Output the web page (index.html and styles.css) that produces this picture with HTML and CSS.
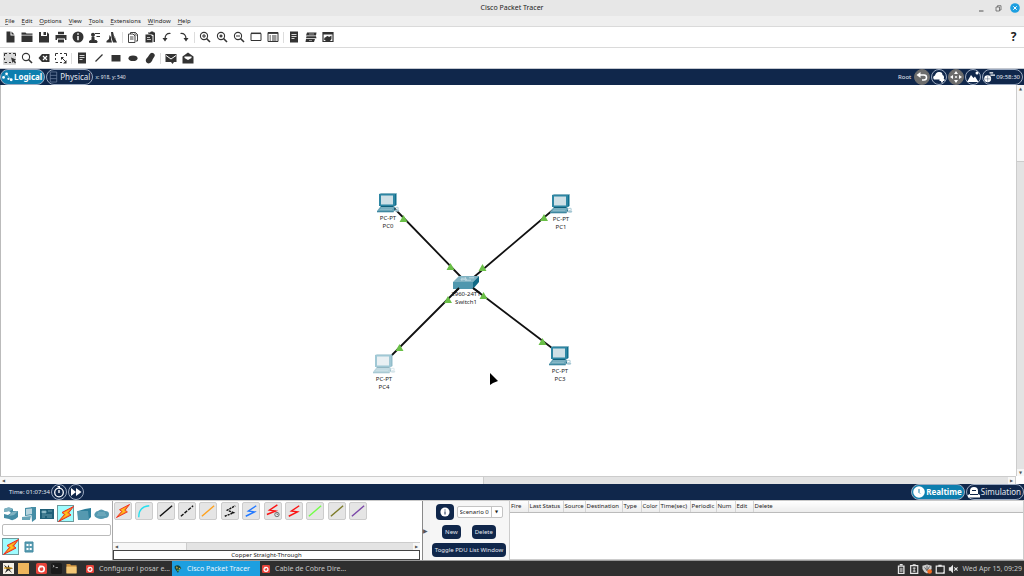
FILE: index.html
```html
<!DOCTYPE html>
<html lang="en">
<head>
<meta charset="utf-8">
<title>Cisco Packet Tracer</title>
<link rel="stylesheet" href="styles.css">
</head>
<body>
<svg class="sprite" aria-hidden="true">
  <symbol id="pc" viewBox="0 0 23 20">
    <path d="M2 1 4 0h15l-1 1z" fill="#7fb0c0"/><path d="M18 1l1.500-1v12L18 13z" fill="#0f6e8c"/>
    <path d="M2 1h16v12H2z" fill="#2e86a3"/><path d="M4 2.500h12v9H4z" fill="#cfe0e6"/>
    <path d="M4 13h12l2 1H3z" fill="#0f5f7a"/>
    <path d="M3 14h15l-1.500 4H0z" fill="#69a5b8"/><path d="M0 18h16.500v1.300H0z" fill="#3f88a0"/><path d="M18 14v3l-1.500 2.300V18z" fill="#1b6b86"/>
    <path d="M4 15h12M3 16.500h12" stroke="#a9cbd6" stroke-width=".5"/>
    <path d="M18 15q4-2 3 1" fill="none" stroke="#8fb9c8" stroke-width=".8"/><ellipse cx="20" cy="17.500" rx="2.300" ry="1.300" fill="#a4c6d2"/>
  </symbol>
  <symbol id="switch" viewBox="0 0 26 13">
    <path d="M6 0h20l-6 6H0z" fill="#7fb2c2"/><path d="M0 6h20v7H0z" fill="#4f97ae"/><path d="M20 6l6-6v6l-6 7z" fill="#0f6a86"/>
    <path d="M8 2.200h5l-1-1m1 1-1 1M14 3.700H8l1-1m-1 1 1 1M21 1.800h-5M18 4.200h-6" fill="none" stroke="#d6e7ed" stroke-width=".7"/>
  </symbol>
  <symbol id="bolt" viewBox="0 0 16 16">
    <path d="M15.500.500 4 6.500 6.500 8.500.500 15.500 13 9 10.500 7z" fill="#f6901a" stroke="#f2281e" stroke-width="1"/><path d="M12 3.500 5.500 6.700 8 8.500 4 12.500 11 8.700 8.500 6.800z" fill="#ffc21e"/>
  </symbol>
  <symbol id="swirl" viewBox="0 0 12 12"><rect width="12" height="12" rx="2" fill="#e8443a"/><circle cx="6" cy="6.500" r="3" fill="none" stroke="#fff" stroke-width="1.800"/><path d="M3.500 2.500 6.500 3.500 5.500 6z" fill="#fff"/></symbol>
  <symbol id="glass" viewBox="0 0 12 12"><circle cx="5" cy="5" r="3.600" fill="none" stroke="#333" stroke-width="1.100"/><path d="M7.500 7.500 11 11" stroke="#333" stroke-width="1.600"/></symbol>
</svg>

<header class="titlebar">
  <h1>Cisco Packet Tracer</h1>
  <div class="window-controls">
    <button aria-label="Minimize"><svg viewBox="0 0 10 10"><path d="M3 8h4.500" stroke="#555"/></svg></button>
    <button aria-label="Restore"><svg viewBox="0 0 10 10"><path d="M3 4h3.500v4H3zM4.500 4V2.700H8V7H6.500" fill="none" stroke="#666" stroke-width=".8"/></svg></button>
    <button class="close" aria-label="Close"><svg viewBox="0 0 10 10"><circle cx="5" cy="5" r="4.800" fill="#1d9fe0"/><path d="M3.300 3.300 6.700 6.700M6.700 3.300 3.300 6.700" stroke="#fff"/></svg></button>
  </div>
</header>

<nav class="menubar">
  <button><u>F</u>ile</button><button><u>E</u>dit</button><button><u>O</u>ptions</button><button><u>V</u>iew</button><button><u>T</u>ools</button><button><u>E</u>xtensions</button><button><u>W</u>indow</button><button><u>H</u>elp</button>
</nav>

<div class="toolbar">
  <button aria-label="New"><svg viewBox="0 0 12 12"><path d="M2.500.500h4v4h4v7h-8zM7.500.500l3 3h-3z" fill="#333"/></svg></button>
  <button aria-label="Open"><svg viewBox="0 0 12 12"><path d="M.500 1.500h4l1 1h6v1.300H.500zM.500 4.500h11V11H.500z" fill="#333"/></svg></button>
  <button aria-label="Save"><svg viewBox="0 0 12 12"><path d="M1 1h2v4h6V1l2 2v8.500H1zM5.500 1H8v3H5.500z" fill="#333"/></svg></button>
  <button aria-label="Print"><svg viewBox="0 0 12 12"><path d="M3 .800h6v2.400H3zM.500 4h11v5H10V7.500H2V9H.500zM3 8.500h6v3H3z" fill="#333"/></svg></button>
  <button aria-label="Activity wizard"><svg viewBox="0 0 12 12"><circle cx="6" cy="6" r="5.500" fill="#333"/><path d="M6 2.300v1.500M6 5v4.200" stroke="#fff" stroke-width="1.500"/></svg></button>
  <button aria-label="User"><svg viewBox="0 0 12 12"><circle cx="4" cy="3.800" r="2" fill="#333"/><path d="M.500 11.500V10L3 9V6h2v3l3 1v1.500zM6 2.500h5M7.500 5.500H11" fill="#333" stroke="#333"/></svg></button>
  <button aria-label="Users"><svg viewBox="0 0 12 12"><path d="M5 1h2l1 4 3 6.500H7L5.500 7zM3.500 4 5 6v2l1 3.500H.500V10L3 8z" fill="#333"/><path d="M8 5l1.500 3" stroke="#999"/></svg></button>
  <span class="separator"></span>
  <button aria-label="Copy"><svg viewBox="0 0 12 12"><path d="M3.500 3V1.500h5l2 2V10H9M1.500 3H6l2 2v6.500H1.500zM3 6h3.500M3 8h3.500" fill="none" stroke="#444"/><path d="M8 1v3h3" fill="none" stroke="#444" stroke-width=".8"/></svg></button>
  <button aria-label="Paste"><svg viewBox="0 0 12 12"><path d="M4 2.500v-1h2l1-1h2l1 1h1V11H9.500V4z" fill="#333"/><path d="M1.500 3.500h5l2 2v6h-7z" fill="#333"/><path d="M3 6.500h3M3 8.500h4" stroke="#fff" stroke-width=".7"/></svg></button>
  <button aria-label="Undo"><svg viewBox="0 0 12 12"><path d="M9.500 2.500Q4 2 4 8" fill="none" stroke="#333" stroke-width="1.200"/><path d="M1.500 7h5L4 10.500z" fill="#333"/></svg></button>
  <button aria-label="Redo"><svg viewBox="0 0 12 12"><path d="M2.500 2.500Q8 2 8 8" fill="none" stroke="#333" stroke-width="1.200"/><path d="M5.500 7h5L8 10.500z" fill="#333"/></svg></button>
  <span class="separator"></span>
  <button aria-label="Zoom in"><svg viewBox="0 0 12 12"><use href="#glass"/><path d="M5 3v4M3 5h4" stroke="#333"/></svg></button>
  <button aria-label="Zoom reset"><svg viewBox="0 0 12 12"><use href="#glass"/><path d="M5 3.500v3M3.500 5h3" stroke="#333" stroke-width="1.400"/></svg></button>
  <button aria-label="Zoom out"><svg viewBox="0 0 12 12"><use href="#glass"/><path d="M3 5h4" stroke="#333"/></svg></button>
  <button aria-label="Drawing palette"><svg viewBox="0 0 12 12"><path d="M1 2.500h10v7H1z" fill="none" stroke="#333"/><path d="M1 2.300h10" stroke="#333" stroke-width="1.500"/></svg></button>
  <button aria-label="Custom devices"><svg viewBox="0 0 12 12"><path d="M1 1.500h10v9H1z" fill="none" stroke="#333"/><path d="M1 2h10" stroke="#333" stroke-width="1.800"/><path d="M2.500 5h1.500M2.500 7h1.500M2.500 9h1.500M5 5h4.500M5 7h4.500M5 9h4.500" stroke="#333"/></svg></button>
  <span class="separator"></span>
  <button aria-label="Notes"><svg viewBox="0 0 12 12"><path d="M2 .500h8v11H2z" fill="#333"/><path d="M3.500 3.500h5M3.500 5.500h5M3.500 7.500h3" stroke="#fff" stroke-width=".8"/></svg></button>
  <button aria-label="Cluster"><svg viewBox="0 0 12 12"><path d="M2 1.500h9.500l-.500 3H1zM1.500 5.200h9.500l.500 2H1zM1 8h9l-1 3H.500z" fill="#333"/><path d="M4 3h5M4 9.500h3" stroke="#ddd" stroke-width=".6"/></svg></button>
  <button aria-label="Monitor"><svg viewBox="0 0 12 12"><path d="M1 1.500h10v9H1z" fill="none" stroke="#333" stroke-width="1.200"/><path d="M1 2.500h10" stroke="#333" stroke-width="2"/><path d="M2 8.500Q2 6 4 6q1.500-2 3 0l2.500-1.500V8L8 10H4z" fill="#333"/></svg></button>
  <button class="help" aria-label="Help">?</button>
</div>

<div class="toolbar">
  <button class="selected" aria-label="Select"><svg viewBox="0 0 12 12"><path d="M.500 4V1.500H3M5 1.500h2M9 1.500h2.500V4M.500 6v2M.500 10.500H3M5 10.500h2" fill="none" stroke="#333"/><path d="M7 5.500 12 7.500 10.500 8.500 12 10.500 11 11.500 9.500 9.500 8.500 11z" fill="#333"/></svg></button>
  <button aria-label="Inspect"><svg viewBox="0 0 12 12"><use href="#glass"/></svg></button>
  <button aria-label="Delete"><svg viewBox="0 0 12 12"><path d="M.500 6 4 2h7.500v8H4z" fill="#333"/><path d="M5 4l4 4M9 4 5 8" stroke="#fff" stroke-width="1.200"/></svg></button>
  <button aria-label="Resize"><svg viewBox="0 0 12 12"><path d="M.500 4V1.500H3M5 1.500h2M9 1.500h2.500V4M.500 6v2M.500 10.500H3M5 10.500h2M7 6l4 4" fill="none" stroke="#333"/><path d="M11.500 8v3.500H8zM6 5h3L6 8z" fill="#333"/></svg></button>
  <span class="separator"></span>
  <button aria-label="Place note"><svg viewBox="0 0 12 12"><path d="M2 .500h8v11H2z" fill="#333"/><path d="M3.500 3.500h5M3.500 5.500h5M3.500 7.500h3" stroke="#fff" stroke-width=".8"/></svg></button>
  <button aria-label="Line"><svg viewBox="0 0 12 12"><path d="M2.500 9.500l7-7" stroke="#333" stroke-width="1.300"/></svg></button>
  <button aria-label="Rectangle"><svg viewBox="0 0 12 12"><path d="M1.500 3h9v6.500h-9z" fill="#333"/></svg></button>
  <button aria-label="Ellipse"><svg viewBox="0 0 12 12"><ellipse cx="6" cy="6.200" rx="4.500" ry="2.800" fill="#333"/></svg></button>
  <button aria-label="Freeform"><svg viewBox="0 0 12 12"><path d="M5.500 2.500Q7 0 9.500 1.200 12 3 9.800 5.500 8.500 7 8 9 6 12.500 3 11 .800 9 2.500 6.500 4 5 5.500 2.500z" fill="#333"/></svg></button>
  <span class="separator"></span>
  <button aria-label="Add simple PDU"><svg viewBox="0 0 12 12"><path d="M.500 2h11v8H9L7.500 12 6 10H.500z" fill="#333"/><path d="M1 3.500l5 3.500 5-3.500" fill="none" stroke="#fff"/></svg></button>
  <button aria-label="Add complex PDU"><svg viewBox="0 0 12 12"><path d="M.500 4.500 6 .500l5.500 4v7H.500z" fill="#333"/><path d="M2.500 4.500h7V6L6 8 2.500 6z" fill="#fff"/></svg></button>
</div>

<div class="navbar">
  <button class="pill active"><svg viewBox="0 0 12 12"><path d="M1.500 6 5 3l4 5" fill="none" stroke="#9cd4e8" stroke-width=".6"/><circle cx="1.700" cy="6.500" r="1.500"/><circle cx="5" cy="2.500" r="1.500"/><circle cx="7" cy="8" r="1.200"/><circle cx="10" cy="9" r="1.600"/></svg>Logical</button>
  <button class="pill"><svg viewBox="0 0 12 12"><path d="M2.500.500h7v11h-7zM2.500 4.200h7M2.500 7.800h7" fill="none" stroke="#7183a2" stroke-width=".8"/></svg>Physical</button>
  <span class="coords">x: 918, y: 540</span>
  <span class="root">Root</span>
  <button class="round gray" aria-label="Back"><svg viewBox="0 0 12 12"><path d="M3 4h5q2.500 0 2.500 2.500T8 9H6" fill="none" stroke="#fff" stroke-width="1.500"/><path d="M.500 4 4.500 1v6z"/></svg></button>
  <button class="round" aria-label="New cluster"><svg viewBox="0 0 12 12"><path d="M1 8.500q-2-3 1-4 1-4 4.500-3.500 3 0 3 3 2.500 1 1 4.500z"/><path d="M9 6.500v5M6.500 9h5" stroke="#fff" stroke-width="1.800"/></svg></button>
  <button class="round gray" aria-label="Move object"><svg viewBox="0 0 12 12"><path d="M6 0l2 3H4zM6 12l2-3H4zM0 6l3-2v4zM12 6 9 4v4z"/><circle cx="6" cy="6" r="1"/></svg></button>
  <button class="round" aria-label="Set background"><svg viewBox="0 0 12 12"><path d="M0 11l4-7 2.500 3L8 5.500 11.500 11z"/><circle cx="10" cy="2" r="1.500"/></svg></button>
  <button class="pill clock"><svg viewBox="0 0 12 12"><circle cx="4" cy="8" r="3.800"/><path d="M6 1.500h4M7 4h5" stroke="#fff" stroke-width="1.300"/><path d="M1 8h6M4 5v6" stroke="#10274b" stroke-width=".4"/></svg>09:58:30</button>
</div>

<main class="workspace">
  <section class="canvas" aria-label="Logical topology">
    <svg class="links" aria-hidden="true">
      <path d="M394 123 461 192M554 124 474 192M392 270 459 203M552 263 473 203" stroke="#111" stroke-width="1.800"/>
      <path d="M403.500 130l4 7h-8zM450.500 178l4 7h-8zM544 129l4 7h-8zM482.500 179l4 7h-8zM399.500 259l4 7h-8zM542.500 253l4 7h-8z" fill="#6abf47"/>
    </svg>
    <figure class="node pc0"><svg class="pc-icon"><use href="#pc"/></svg><figcaption>PC-PT<br>PC0</figcaption></figure>
    <figure class="node pc1"><svg class="pc-icon"><use href="#pc"/></svg><figcaption>PC-PT<br>PC1</figcaption></figure>
    <figure class="node pc3"><svg class="pc-icon"><use href="#pc"/></svg><figcaption>PC-PT<br>PC3</figcaption></figure>
    <figure class="node pc4"><svg class="pc-icon"><use href="#pc"/></svg><figcaption>PC-PT<br>PC4</figcaption></figure>
    <figure class="node switch1"><svg class="switch-icon"><use href="#switch"/></svg><figcaption>2960-24TT<br>Switch1</figcaption></figure>
    <svg class="links" aria-hidden="true"><path d="M448 211l4 7h-8zM483.500 207l4 7h-8z" fill="#6abf47"/><path d="M459 203l-6 6M473 203l7 5" stroke="#111" stroke-width="1.800"/><path d="M490 288v12l3-2 5-2z" fill="#000"/></svg>
  </section>
  <div class="vscroll"><button aria-label="Scroll up">▲</button><i></i><span></span><button aria-label="Scroll down">▼</button></div>
  <div class="hscroll"><button aria-label="Scroll left">◀</button><i></i><span></span><button aria-label="Scroll right">▶</button></div>
</main>

<div class="timebar">
  <span>Time: 01:07:34</span>
  <button class="round" aria-label="Power cycle devices"><svg viewBox="0 0 12 12"><circle cx="6" cy="6.500" r="4.300" fill="none" stroke="#fff" stroke-width="1.300"/><path d="M4 0h3v3zM5.300 4h1.400v3H5.300z"/></svg></button>
  <button class="round" aria-label="Fast forward"><svg viewBox="0 0 12 12"><path d="M1 2l5 4-5 4zM6 2l5.500 4L6 10z"/></svg></button>
  <button class="pill active mode"><svg viewBox="0 0 12 12"><circle cx="6" cy="6" r="5.800"/><path d="M6 3v3.500l1 1" fill="none" stroke="#0d7eae"/></svg>Realtime</button>
  <button class="pill"><svg viewBox="0 0 12 12"><path d="M2 8V5q0-4 4-4t4 4v3l2 1v2.500H0V9z"/><path d="M4 4.500h4M2 8.500h8" stroke="#10274b"/></svg>Simulation</button>
</div>

<section class="bottom">
  <div class="devices">
    <div class="device-row full">
      <button aria-label="Network devices"><svg viewBox="0 0 16 16"><path d="M1 3q5-3 9 0v2h5v6q-5 5-9 2l-5-1V8l4 1 3-2-2-2-5 1z" fill="#448ca5"/><path d="M1 3q5-3 9 0L7 5 1 6zM9 6l6-1-4 4-5 1z" fill="#7fb2c2"/></svg></button>
      <button aria-label="End devices"><svg viewBox="0 0 16 16"><path d="M10 1h5v12l-4 3z" fill="#448ca5"/><path d="M4 2l8-1v8l-8 1z" fill="#448ca5"/><path d="M5 3l6-.600v5.600L5 9z" fill="#b8d4de"/><path d="M1 11l9-1-1 4H1z" fill="#69a5b8"/></svg></button>
      <button aria-label="Components"><svg viewBox="0 0 16 16"><path d="M1 3h14v10H1z" fill="#1f5f78"/><path d="M3 5h4v2H3zM9 5h4M3 9h10M3 11h3M8 11h5" fill="#9bc3d1" stroke="#7aa9b9" stroke-width=".8"/></svg></button>
      <button class="picked" aria-label="Connections"><svg viewBox="0 0 16 16"><use href="#bolt"/></svg></button>
      <button aria-label="Miscellaneous"><svg viewBox="0 0 16 16"><path d="M2 5l7-2 6-1v9l-2 2H2z" fill="#2e7f9b"/><path d="M1 5h11l1 9H2z" fill="#5599b0"/></svg></button>
      <button aria-label="Multiuser connection"><svg viewBox="0 0 16 16"><path d="M3 12q-4-2-2-5 1-2 3-2 3-3 7 0 4 0 4 3 0 4-4 4-4 2-8 0z" fill="#5599b0"/><path d="M4 7h7M3 9h9" stroke="#82b5c5"/></svg></button>
    </div>
    <input type="text" aria-label="Search devices">
    <div class="device-row">
      <button class="picked" aria-label="Connections"><svg viewBox="0 0 16 16"><use href="#bolt"/></svg></button>
      <button aria-label="Structured cabling"><svg viewBox="0 0 16 16"><path d="M4 3h8v10H4z" fill="#5c9eb3" stroke="#3f88a0"/><path d="M5.500 5h2v2h-2zM8.700 5h2v2h-2zM5.500 9h2v2h-2zM8.700 9h2v2h-2z" fill="#fff"/></svg></button>
    </div>
  </div>
  <div class="cables">
    <div class="cable-row">
      <button aria-label="Automatic"><svg viewBox="0 0 16 16"><use href="#bolt"/></svg></button>
      <button aria-label="Console"><svg viewBox="0 0 16 16"><path d="M2 15Q2 3 14 2" stroke="#25dfee"/></svg></button>
      <button aria-label="Copper Straight-Through"><svg viewBox="0 0 16 16"><path d="M1 14 15 2" stroke="#111"/></svg></button>
      <button aria-label="Copper Cross-Over"><svg viewBox="0 0 16 16"><path d="M1 14 15 2" stroke="#111" stroke-dasharray="4 1.500"/></svg></button>
      <button aria-label="Fiber"><svg viewBox="0 0 16 16"><path d="M1 14 15 2" stroke="#ffa11c"/></svg></button>
      <button aria-label="Phone"><svg viewBox="0 0 16 16"><path d="M2 14 12 10 5 7 14 2" stroke="#111" stroke-dasharray="2.500 1"/></svg></button>
      <button aria-label="Coaxial"><svg viewBox="0 0 16 16"><path d="M2 14 12 9 5 8 14 2" stroke="#2379ff"/></svg></button>
      <button aria-label="Serial DCE"><svg viewBox="0 0 16 16"><path d="M1 12 11 8 4 7 13 1" stroke="#fb1414"/><circle cx="12.500" cy="12" r="2.500" stroke="#444" stroke-width=".8"/><path d="M12.500 10.500v1.500h1.500" stroke="#444" stroke-width=".7"/></svg></button>
      <button aria-label="Serial DTE"><svg viewBox="0 0 16 16"><path d="M2 14 12 9 5 8 14 2" stroke="#fb1414"/></svg></button>
      <button aria-label="Octal"><svg viewBox="0 0 16 16"><path d="M1 14 15 2" stroke="#72ff48"/></svg></button>
      <button aria-label="IoT Custom Cable"><svg viewBox="0 0 16 16"><path d="M1 14 15 2" stroke="#7c7a27"/></svg></button>
      <button aria-label="USB"><svg viewBox="0 0 16 16"><path d="M1 14 15 2" stroke="#7a46a8"/></svg></button>
    </div>
    <div class="cable-scroll"><button aria-label="Scroll left">◀</button><i></i><span></span><button aria-label="Scroll right">▶</button></div>
    <p class="cable-name">Copper Straight-Through</p>
  </div>
  <button class="splitter" aria-label="Collapse panel">▶</button>
  <div class="scenario">
    <div class="scenario-row">
      <button class="info" aria-label="Scenario information"><svg viewBox="0 0 12 12"><circle cx="6" cy="6" r="5.500" fill="#fff"/><path d="M6 3v1.200M6 5.300V9" stroke="#10274b" stroke-width="1.200"/></svg></button>
      <span class="select-box"><select aria-label="Scenario"><option>Scenario 0</option></select><b>▼</b></span>
    </div>
    <div class="scenario-row spaced"><button>New</button><button>Delete</button></div>
    <button>Toggle PDU List Window</button>
  </div>
  <div class="pdu">
    <table>
      <thead><tr><th class="c18">Fire</th><th class="c35">Last Status</th><th class="c22">Source</th><th class="c37">Destination</th><th class="c19">Type</th><th class="c18">Color</th><th class="c31">Time(sec)</th><th class="c26">Periodic</th><th class="c19">Num</th><th class="c18">Edit</th><th>Delete</th></tr></thead>
    </table>
  </div>
</section>

<footer class="taskbar">
  <div class="launchers">
    <button aria-label="Menu"><svg viewBox="0 0 12 12"><path d="M0 0h12v12H0z" fill="#f5f1e6"/><path d="M1 2l4 3 1-3 1 3 4 1-4 1 3 4-4-3-4 3 2-4z" fill="#222"/><path d="M1 5.500h9" stroke="#e6a417" stroke-width="1.300"/></svg></button>
    <button class="desktop" aria-label="Show desktop"><svg viewBox="0 0 12 12"><path d="M0 0h12v12H0z" fill="#eeb65d"/></svg></button>
    <button aria-label="Browser"><svg viewBox="0 0 12 12"><use href="#swirl"/></svg></button>
    <button aria-label="Terminal"><svg viewBox="0 0 12 12"><rect width="12" height="12" rx="2" fill="#1b1b1b"/><path d="M2 2.500l1.500 1L2 4.500M5 5h2.500" fill="none" stroke="#ddd" stroke-width=".8"/></svg></button>
    <button aria-label="Files"><svg viewBox="0 0 12 12"><path d="M.500 1h4l1 1.500h6V11H.500z" fill="#cf9440"/><path d="M.500 4h11v7.500H.500z" fill="#f4c877"/></svg></button>
  </div>
  <button class="task"><svg viewBox="0 0 12 12"><use href="#swirl"/></svg>Configurar i posar e...</button>
  <button class="task current"><svg viewBox="0 0 12 12"><path d="M1 2q4-3 8 0l2 3-3 2-2 5-3-4-2-3z" fill="#17463f"/><path d="M3 2l3 2-2 2zM7 5l3-1-2 3z" fill="#e7b93b"/><circle cx="6" cy="8" r="1.300" fill="#64b946"/></svg>Cisco Packet Tracer</button>
  <button class="task"><svg viewBox="0 0 12 12"><use href="#swirl"/></svg>Cable de Cobre Dire...</button>
  <div class="tray">
    <svg viewBox="0 0 12 12"><path d="M3 2.500h6.500v9H3zM4.500.800h3.500" fill="none" stroke="#e6e6e6" stroke-width="1.600"/><path d="M4.500 4.500h3.500V10H4.500z" fill="#999"/></svg>
    <svg viewBox="0 0 12 12"><path d="M2 2h8.500v9.300H2zM4.500 1h3.500" fill="none" stroke="#e6e6e6" stroke-width="1.400"/><path d="M6.200 4v5.500M4.500 5h3.500M4.500 8.500h3.500" stroke="#e6e6e6"/></svg>
    <svg viewBox="0 0 12 12"><path d="M.500 2 6 .500 11.500 2v4Q10 10 6 11.500 2 10 .500 6z" fill="#ccc"/><path d="M3 4l3 4 3-5M6 2v6" fill="none" stroke="#555"/><circle cx="9.200" cy="9" r="2.800" fill="#f26a21"/></svg>
    <svg viewBox="0 0 12 12"><path d="M1.500 2.500h9.500v8.500H1.500z" fill="none" stroke="#e6e6e6" stroke-width="1.500"/><path d="M1 9l2 2H1zM11 9l-2 2h2zM4 1h4v2H4z" fill="#e6e6e6"/></svg>
    <svg viewBox="0 0 12 12"><path d="M1 4h2l3-3v10L3 8H1z" fill="#e6e6e6"/><path d="M7.500 4l4 4M11.500 4l-4 4" stroke="#e6e6e6" stroke-width="1.300"/></svg>
    <time>Wed Apr 15, 09:29</time>
  </div>
</footer>
</body>
</html>
```
FILE: styles.css
```css
* { box-sizing: border-box; }

body {
  margin: 0;
  height: 100vh;
  display: flex;
  flex-direction: column;
  overflow: hidden;
  background: #fff;
  color: #222;
  font: 6px/8px "Noto Sans", sans-serif;
}

button, input, select {
  margin: 0;
  padding: 0;
  border: 0;
  background: none;
  color: inherit;
  font: inherit;
}

button svg, .tray svg { display: block; flex: none; }
.sprite { display: none; }

/* Window frame */
.titlebar {
  display: grid;
  grid-template-columns: 1fr auto 1fr;
  align-items: center;
  height: 16px;
  background: #e7e7e7;
}
.titlebar h1 { grid-column: 2; margin: 0; font: 7px/10px "Noto Sans", sans-serif; }
.window-controls { display: flex; justify-content: flex-end; gap: 7px; padding-right: 4px; }
.window-controls svg { width: 10px; height: 10px; }

.menubar {
  display: flex;
  align-items: center;
  gap: 7px;
  height: 10px;
  padding-left: 5px;
  background: #efefef;
}
.menubar u { text-underline-offset: 1px; text-decoration-thickness: 1px; text-decoration-color: #777; }

.toolbar {
  display: flex;
  align-items: center;
  height: 21px;
  padding: 0 2px 0 1px;
  border-top: 1px solid #dadada;
}
.toolbar button { display: flex; align-items: center; justify-content: center; width: 17px; height: 16px; }
.toolbar button svg { width: 12px; height: 12px; }
.toolbar .selected { width: 13px; height: 13px; margin: 0 2px; background: #d9d9d9; border-radius: 1px; }
.toolbar .help { margin-left: auto; font: bold 12px/14px "Noto Sans", sans-serif; }
.separator { width: 1px; height: 11px; margin: 0 1px 0 2px; background: #ddd; }

/* Navy bars */
.navbar, .timebar {
  display: flex;
  align-items: center;
  gap: 1px;
  background: #10274b;
  color: #e3e8f0;
}
.navbar { height: 17px; padding-right: 1px; border-top: 1px solid #c4c8d0; }
.pill {
  display: flex;
  align-items: center;
  gap: 1px;
  height: 16px;
  padding: 0 2px 0 1px;
  border: 1px solid #9caac0;
  border-radius: 8px;
  font-size: 8px;
}
.pill svg { width: 12px; height: 12px; fill: #fff; }
.pill.active { background: #0d7eae; color: #fff; font-weight: bold; }
.navbar .pill svg { width: 11px; }
.coords { padding-left: 1px; font-size: 5px; }
.root { margin-left: auto; padding-right: 2px; }
.navbar .clock { padding-right: 2px; font-size: 6px; }
.round {
  display: flex;
  align-items: center;
  justify-content: center;
  width: 16px;
  height: 16px;
  border: 1px solid #9caac0;
  border-radius: 8px;
}
.round svg { width: 12px; height: 12px; fill: #fff; }
.round.gray { background: #6d6d6d; border-color: #6d6d6d; }
.timebar { height: 16px; padding-left: 9px; }
.timebar .mode { margin-left: auto; }

/* Topology */
.workspace {
  flex: 1;
  min-height: 0;
  display: grid;
  grid-template-columns: 1fr 8px;
  grid-template-rows: 1fr 8px;
}
.canvas { position: relative; overflow: hidden; box-shadow: inset 1px 0 #bbb; }
.links { position: absolute; inset: 0; width: 100%; height: 100%; }
.node {
  position: absolute;
  display: flex;
  flex-direction: column;
  align-items: center;
  gap: 1px;
  width: 40px;
  margin: 0;
  text-align: center;
}
.pc-icon { width: 23px; height: 20px; }
.switch-icon { width: 26px; height: 13px; }
.pc0 { left: 368px; top: 108px; }
.pc1 { left: 541px; top: 109px; }
.pc3 { left: 540px; top: 261px; }
.pc4 { left: 364px; top: 269px; }
.pc4 .pc-icon { opacity: .45; }
.switch1 { left: 446px; top: 191px; }

.vscroll, .hscroll, .cable-scroll { display: flex; background: #e3e3e3; }
.vscroll { flex-direction: column; border-left: 1px solid #ccc; }
.hscroll { border-top: 1px solid #ccc; border-right: 1px solid #ccc; }
.vscroll i, .hscroll i, .cable-scroll i { background: #f7f7f7; }
.vscroll i { flex: 69; border-bottom: 1px solid #ccc; }
.vscroll span { flex: 308; }
.hscroll i { flex: 476; border-right: 1px solid #ccc; }
.hscroll span { flex: 525; }
.vscroll button, .hscroll button, .cable-scroll button {
  width: 7px;
  height: 7px;
  background: #f7f7f7;
  color: #555;
  font: 4px/7px "DejaVu Sans", sans-serif;
}

/* Lower panels */
.bottom {
  display: flex;
  height: 61px;
  border-top: 1px solid #c9c9c9;
  border-bottom: 1px solid #999;
}
.devices { display: flex; flex-direction: column; gap: 2px; width: 113px; padding: 4px 1px 0 2px; border-right: 1px solid #aaa; }
.device-row { display: flex; gap: 1px; }
.device-row.full { justify-content: space-between; gap: 0; }
.device-row button { display: flex; align-items: center; justify-content: center; width: 17px; height: 17px; }
.device-row button svg { width: 16px; height: 16px; }
.device-row .picked { background: #9ffcff; border: 1px solid #6d9a9c; }
.devices input { height: 12px; border: 1px solid #bbb; border-radius: 2px; }

.cables { display: flex; flex-direction: column; width: 307px; }
.cable-row { display: flex; justify-content: space-between; width: 254px; padding: 1px 0 0 1px; }
.cable-row button {
  display: flex;
  align-items: center;
  justify-content: center;
  width: 18px;
  height: 18px;
  border: 1px solid #ccc;
  border-radius: 2px;
  background: #e5e5e5;
}
.cable-row svg { width: 14px; height: 14px; fill: none; stroke-width: 1.600; }
.cable-scroll { height: 8px; margin-top: auto; border-top: 1px solid #ccc; }
.cable-scroll i { flex: 66; border-right: 1px solid #ccc; }
.cable-scroll span { flex: 227; }
.cable-name { height: 10px; margin: 0; border: 1px solid #444; text-align: center; }

.splitter {
  width: 8px;
  margin-left: 2px;
  border-left: 1px solid #888;
  background: #f2f2f2;
  color: #555;
  font: 6px/8px "DejaVu Sans", sans-serif;
  text-align: left;
}
.scenario { display: flex; flex-direction: column; align-items: center; justify-content: space-between; width: 79px; padding: 3px 3px 3px 2px; background: #f6f6f6; }
.scenario-row { display: flex; align-items: center; gap: 3px; }
.scenario-row.spaced { gap: 11px; }
.scenario button { height: 14px; padding: 0 3px; border-radius: 4px; background: #10274b; color: #e3e8f0; white-space: nowrap; }
.scenario .info { width: 18px; height: 16px; }
.info svg { width: 10px; height: 10px; margin: auto; }
.select-box { display: flex; width: 46px; height: 12px; border: 1px solid #c4c4c4; border-radius: 2px; background: #fff; }
.select-box select { flex: 1; min-width: 0; padding-left: 2px; appearance: none; }
.select-box b { width: 11px; border-left: 1px solid #c4c4c4; font: 4px/10px "DejaVu Sans", sans-serif; text-align: center; }

.pdu { flex: 1; border: 1px solid #ccc; border-top: 0; }
.pdu table { width: 100%; table-layout: fixed; border-collapse: collapse; }
.pdu th { height: 11px; padding: 0 0 0 1px; border-bottom: 1px solid #bbb; border-right: 1px solid #d4d4d4; background: linear-gradient(#fff, #ececec); font-weight: normal; text-align: left; white-space: nowrap; }
.pdu th:last-child { border-right: 0; }
.c18 { width: 18px; }
.c19 { width: 19px; }
.c22 { width: 22px; }
.c26 { width: 26px; }
.c31 { width: 31px; }
.c35 { width: 35px; }
.c37 { width: 37px; }

/* Desktop panel */
.taskbar { display: flex; height: 15px; background: #2f2f2f; color: #c6c6c6; font-size: 7px; line-height: 10px; }
.launchers { display: flex; align-items: center; gap: 4px; width: 84px; padding-left: 3px; }
.launchers svg { width: 11px; height: 11px; }
.launchers .desktop { margin-right: 3px; }
.task { display: flex; align-items: center; gap: 5px; width: 88px; padding-left: 2px; white-space: nowrap; }
.task svg { width: 8px; height: 8px; }
.task.current { background: #1d9fe0; color: #e8f6fd; }
.tray { display: flex; align-items: center; gap: 3px; margin-left: auto; padding-right: 2px; }
.tray svg { width: 10px; height: 10px; }
.tray time { padding-left: 1px; }
```
